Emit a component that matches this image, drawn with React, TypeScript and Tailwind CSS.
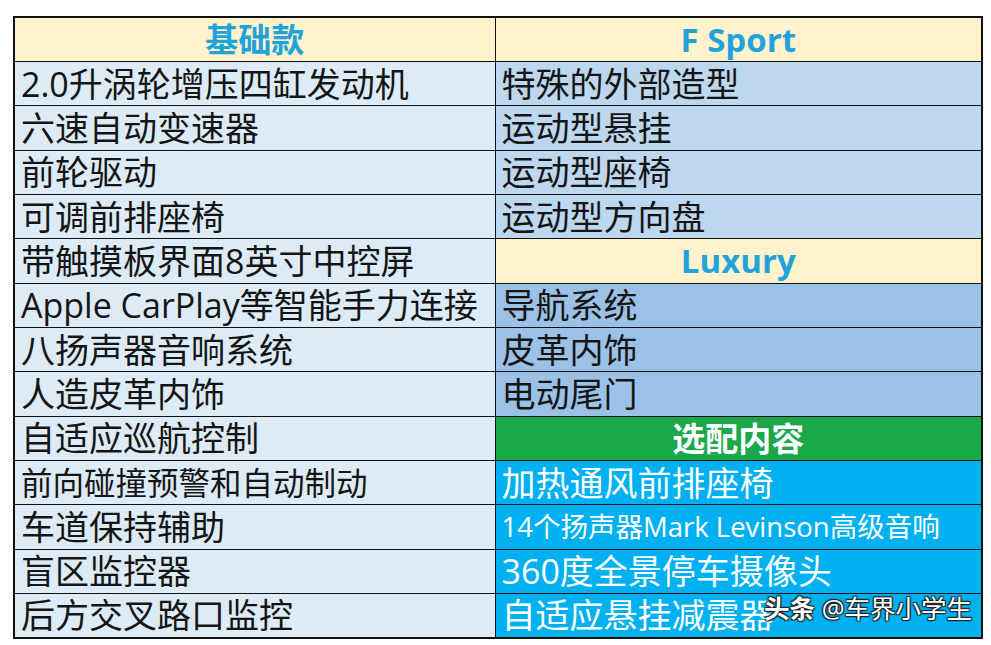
import React from "react";

type Cell = {
  text: string;
  kind: "base" | "head" | "sport" | "lux" | "green" | "opt";
  size?: string;
};

const rows: [Cell, Cell][] = [
  [{ text: "基础款", kind: "head" }, { text: "F Sport", kind: "head" }],
  [{ text: "2.0升涡轮增压四缸发动机", kind: "base" }, { text: "特殊的外部造型", kind: "sport" }],
  [{ text: "六速自动变速器", kind: "base" }, { text: "运动型悬挂", kind: "sport" }],
  [{ text: "前轮驱动", kind: "base" }, { text: "运动型座椅", kind: "sport" }],
  [{ text: "可调前排座椅", kind: "base" }, { text: "运动型方向盘", kind: "sport" }],
  [{ text: "带触摸板界面8英寸中控屏", kind: "base" }, { text: "Luxury", kind: "head" }],
  [{ text: "Apple CarPlay等智能手力连接", kind: "base" }, { text: "导航系统", kind: "lux" }],
  [{ text: "八扬声器音响系统", kind: "base" }, { text: "皮革内饰", kind: "lux" }],
  [{ text: "人造皮革内饰", kind: "base" }, { text: "电动尾门", kind: "lux" }],
  [{ text: "自适应巡航控制", kind: "base" }, { text: "选配内容", kind: "green" }],
  [
    { text: "前向碰撞预警和自动制动", kind: "base", size: "text-[31.5px]" },
    { text: "加热通风前排座椅", kind: "opt" },
  ],
  [
    { text: "车道保持辅助", kind: "base" },
    { text: "14个扬声器Mark Levinson高级音响", kind: "opt", size: "text-[27.5px]" },
  ],
  [{ text: "盲区监控器", kind: "base" }, { text: "360度全景停车摄像头", kind: "opt" }],
  [{ text: "后方交叉路口监控", kind: "base" }, { text: "自适应悬挂减震器", kind: "opt" }],
];

const kindClass: Record<Cell["kind"], string> = {
  base: "bg-[#ddebf7] text-[#151515]",
  head: "bg-[#fff2cc] text-[#1fa3da] font-bold text-center",
  sport: "bg-[#bdd7ee] text-[#151515]",
  lux: "bg-[#9bc2e6] text-[#151515]",
  green: "bg-[#1aa84b] text-white font-bold text-center",
  opt: "bg-[#00b0f0] text-white",
};

export default function App() {
  return (
    <div
      className="w-[991px] h-[645px] bg-white relative"
      style={{ fontFamily: '"Open Sans", "Noto Sans CJK SC", sans-serif' }}
    >
      <div className="pt-[16px] pl-[13px]">
        <table className="border-collapse border-2 border-[#111] w-[968px] table-fixed">
          <colgroup>
            <col className="w-[481px]" />
            <col className="w-[487px]" />
          </colgroup>
          <tbody>
            {rows.map((r, i) => (
              <tr key={i} className="h-[44.35px]">
                {r.map((c, j) => (
                  <td
                    key={j}
                    className={`border border-[#111] p-0 px-[6px] leading-none whitespace-nowrap overflow-hidden ${
                      c.size ?? (c.kind === "head" || c.kind === "green" ? "text-[33px]" : "text-[34px]")
                    } ${kindClass[c.kind]}`}
                  >
                    {c.text}
                  </td>
                ))}
              </tr>
            ))}
          </tbody>
        </table>
      </div>
      {/* watermark */}
      <div
        className="absolute left-[764px] top-[596px] text-white font-bold text-[25.5px] leading-none whitespace-nowrap"
        style={{
          textShadow:
            "1px 1px 1px #222, -1px -1px 1px #222, 1px -1px 1px #222, -1px 1px 1px #222",
        }}
      >
        头条 <span className="font-normal">@车界小学生</span>
      </div>
    </div>
  );
}
